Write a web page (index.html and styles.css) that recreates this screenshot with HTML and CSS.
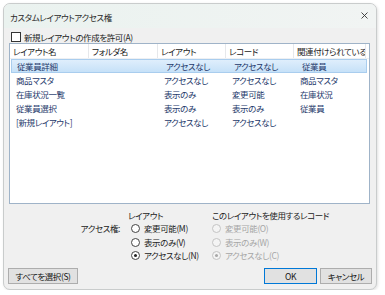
FILE: index.html
```html
<!DOCTYPE html>
<html lang="ja">
<head>
  <meta charset="UTF-8">
  <title>カスタムレイアウトアクセス権</title>
  <link rel="stylesheet" href="styles.css">
</head>
<body>
  <div class="window">
    <!-- Title bar -->
    <div class="titlebar">
      <span class="title">カスタムレイアウトアクセス権</span>
      <svg class="close" width="7" height="7" viewBox="0 0 7 7">
        <path d="M0.5 0.5 L6.5 6.5 M6.5 0.5 L0.5 6.5" stroke="#333" stroke-width="0.9" fill="none"/>
      </svg>
    </div>

    <div class="content">
      <!-- Allow new layouts -->
      <div class="check">
        <span class="box"></span>
        <span>新規レイアウトの作成を許可(A)</span>
      </div>

      <!-- Layout list -->
      <div class="list">
        <div class="list-head">
          <div class="cell">レイアウト名</div>
          <div class="cell">フォルダ名</div>
          <div class="cell">レイアウト</div>
          <div class="cell">レコード</div>
          <div class="cell">関連付けられているテーブル</div>
        </div>
        <div class="row selected">
          <div class="cell">従業員詳細</div>
          <div class="cell"></div>
          <div class="cell">アクセスなし</div>
          <div class="cell">アクセスなし</div>
          <div class="cell">従業員</div>
        </div>
        <div class="row">
          <div class="cell">商品マスタ</div>
          <div class="cell"></div>
          <div class="cell">アクセスなし</div>
          <div class="cell">アクセスなし</div>
          <div class="cell">商品マスタ</div>
        </div>
        <div class="row">
          <div class="cell">在庫状況一覧</div>
          <div class="cell"></div>
          <div class="cell">表示のみ</div>
          <div class="cell">変更可能</div>
          <div class="cell">在庫状況</div>
        </div>
        <div class="row">
          <div class="cell">従業員選択</div>
          <div class="cell"></div>
          <div class="cell">表示のみ</div>
          <div class="cell">表示のみ</div>
          <div class="cell">従業員</div>
        </div>
        <div class="row">
          <div class="cell">[新規レイアウト]</div>
          <div class="cell"></div>
          <div class="cell">アクセスなし</div>
          <div class="cell">アクセスなし</div>
          <div class="cell"></div>
        </div>
      </div>

      <!-- Access options -->
      <div class="access">
        <div class="access-label">アクセス権:</div>
        <div class="group group-layout">
          <div class="group-title">レイアウト</div>
          <div class="radio"><span class="dot"></span>変更可能(M)</div>
          <div class="radio"><span class="dot"></span>表示のみ(V)</div>
          <div class="radio"><span class="dot on"></span>アクセスなし(N)</div>
        </div>
        <div class="group group-records">
          <div class="group-title">このレイアウトを使用するレコード</div>
          <div class="radio disabled"><span class="dot"></span>変更可能(O)</div>
          <div class="radio disabled"><span class="dot"></span>表示のみ(W)</div>
          <div class="radio disabled"><span class="dot on"></span>アクセスなし(C)</div>
        </div>
      </div>

      <!-- Buttons -->
      <div class="buttons">
        <button class="btn btn-select">すべてを選択(S)</button>
        <div class="btn-group">
          <button class="btn btn-ok">OK</button>
          <button class="btn btn-cancel">キャンセル</button>
        </div>
      </div>
    </div>
  </div>
</body>
</html>
```

FILE: styles.css
```css
/* Dialog styles */
body {
  margin: 0;
  padding: 0;
  background-color: #fff;
  font-family: "Noto Sans CJK JP", "Noto Sans", sans-serif;
  font-size: 8.5px;
  line-height: 12px;
  letter-spacing: -0.4px;
  font-feature-settings: "palt";
  color: #222;
}

.window {
  box-sizing: border-box;
  width: 374px;
  height: 287px;
  margin: 3px 0 0 3px;
  border: 1px solid #c9cccc;
  border-radius: 7px;
  background-color: #f0f0f0;
  box-shadow: 1px 1px 3px rgba(0, 0, 0, 0.12);
  overflow: hidden;
}

.titlebar {
  display: flex;
  align-items: center;
  justify-content: space-between;
  height: 24px;
  padding: 0 8px 0 6px;
  background: linear-gradient(to right, #eaf2ef, #f1f4f3);
}

.title {
  color: #2a2a2a;
  margin-top: 1px;
}

.close {
  margin-top: -1px;
}

.content {
  padding: 3px 4px 0 4px;
}

.check {
  display: flex;
  align-items: center;
  height: 12px;
  gap: 3px;
  padding-left: 3px;
  color: #222;
}

.check .box {
  box-sizing: border-box;
  width: 10px;
  height: 10px;
  border: 1px solid #333;
  background-color: #fff;
}

.list {
  box-sizing: border-box;
  width: 361px;
  height: 161px;
  margin-left: 1px;
  border: 1px solid #9fb3c8;
  background-color: #fff;
  overflow: hidden;
}

.list-head,
.row {
  display: grid;
  grid-template-columns: 79px 69px 68px 68px 72px;
}

.list-head {
  height: 14px;
  border-bottom: 1px solid #eef0f3;
  color: #222;
}

.list-head .cell {
  padding-left: 3px;
  line-height: 14px;
  border-right: 1px solid #e6e8eb;
  white-space: nowrap;
  overflow: hidden;
}

.row {
  height: 14px;
  color: #24386a;
}

.row .cell {
  padding-left: 6px;
  line-height: 14px;
  white-space: nowrap;
  overflow: hidden;
}

.row.selected {
  box-sizing: border-box;
  margin: 0 2px 0 1px;
  border: 1px solid #a9cdee;
  background: linear-gradient(#dfeefc, #c6e1f8);
}

.row.selected .cell {
  line-height: 12px;
}

.row.selected .cell:first-child {
  padding-left: 5px;
}

.access {
  display: flex;
  height: 59px;
  padding-top: 4px;
}

.access-label {
  width: 112px;
  flex-shrink: 0;
  text-align: right;
  padding-top: 14px;
  line-height: 13.5px;
  color: #222;
}

.group {
  flex-shrink: 0;
  white-space: nowrap;
}

.group-layout {
  width: 84px;
  margin-left: 8px;
}

.group-title {
  line-height: 14px;
  color: #222;
}

.radio {
  display: flex;
  align-items: center;
  height: 13.5px;
  line-height: 13.5px;
  gap: 4px;
  padding-left: 3px;
  color: #222;
}

.group-records .radio {
  padding-left: 0;
}

.dot {
  box-sizing: border-box;
  flex-shrink: 0;
  width: 9px;
  height: 9px;
  border: 1px solid #444;
  border-radius: 50%;
  background-color: #fff;
  position: relative;
}

.dot.on::after {
  content: "";
  position: absolute;
  left: 2px;
  top: 2px;
  width: 3px;
  height: 3px;
  border-radius: 50%;
  background-color: #222;
}

.radio.disabled {
  color: #a6a6a6;
}

.radio.disabled .dot {
  border-color: #c4c4c4;
  background-color: #f4f4f4;
}

.radio.disabled .dot.on::after {
  background-color: #a8a8a8;
}

.buttons {
  display: flex;
  justify-content: space-between;
  align-items: center;
  margin-top: 1px;
}

.btn-group {
  display: flex;
  gap: 3px;
}

.btn {
  box-sizing: border-box;
  height: 16px;
  padding: 0;
  font-family: inherit;
  font-size: 8.5px;
  letter-spacing: -0.4px;
  font-feature-settings: "palt";
  color: #111;
  background-color: #e1e1e1;
  border: 1px solid #adadad;
  line-height: 13px;
}

.btn-select {
  width: 70px;
}

.btn-ok {
  width: 53px;
  border-color: #0078d7;
}

.btn-cancel {
  width: 52px;
}
```
